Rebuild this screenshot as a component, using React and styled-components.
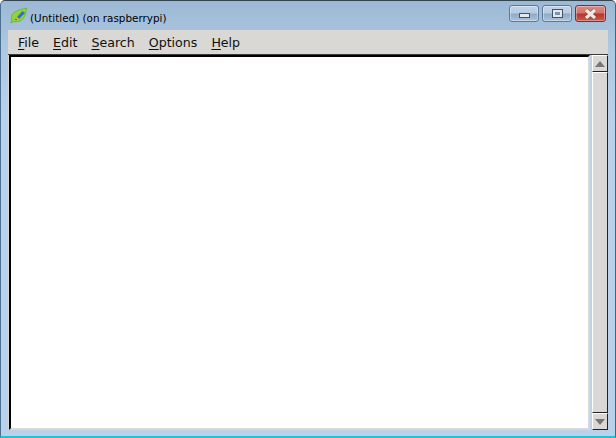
import React from "react";
import styled, { createGlobalStyle } from "styled-components";

const Global = createGlobalStyle`
  html, body {
    margin: 0;
    padding: 0;
    height: 100%;
    overflow: hidden;
  }
  #root {
    height: 100%;
  }
`;

const Frame = styled.div`
  width: 616px;
  height: 438px;
  box-sizing: border-box;
  display: flex;
  flex-direction: column;
  border: 1px solid #2f6f80;
  border-left-color: #4a7090;
  border-top-color: #33454f;
  border-bottom: 2px solid #1ec3d6;
  border-radius: 5px 5px 0 0;
  padding: 0 7px 6px 7px;
  background: linear-gradient(to bottom, #9cb8d4 0, #b0c9e2 50px, #b9d1ea 120px, #b9d1ea 100%);
  font-family: "DejaVu Sans", sans-serif;
`;

const TitleBar = styled.div`
  height: 29px;
  flex: none;
  display: flex;
  align-items: center;
  padding-left: 2px;
  gap: 3px;
`;

const TitleText = styled.span`
  font-size: 10.4px;
  color: #000;
  flex: 1;
  padding-top: 4px;
`;

const WinButtons = styled.div`
  display: flex;
  gap: 3px;
  margin-right: 2px;
  margin-top: -4px;
`;

const WinButton = styled.div`
  width: ${(p) => p.$w}px;
  height: 17px;
  box-sizing: border-box;
  display: flex;
  align-items: center;
  justify-content: center;
  border: 1px solid ${(p) => (p.$close ? "#7a3030" : "#5f7a96")};
  border-radius: 3px;
  box-shadow: inset 0 0 0 1px rgba(255, 255, 255, 0.35);
  background: ${(p) =>
    p.$close
      ? "linear-gradient(to bottom, #dc8b80 0, #d3736a 45%, #b8352a 55%, #c95a4c 100%)"
      : "linear-gradient(to bottom, #c2d5e9 0, #b4cbe2 45%, #8fabc8 55%, #aac4de 100%)"};
`;

const MinGlyph = styled.div`
  width: 11px;
  height: 5px;
  box-sizing: border-box;
  background: #e4e8ec;
  border: 1px solid #3f5468;
  margin-top: 4px;
`;

const MaxGlyph = styled.div`
  width: 11px;
  height: 9px;
  box-sizing: border-box;
  background: #e4e8ec;
  border: 1px solid #3f5468;
  display: flex;
  align-items: center;
  justify-content: center;

  &::after {
    content: "";
    width: 5px;
    height: 3px;
    background: #7b93ab;
  }
`;

const MenuBar = styled.div`
  height: 24px;
  flex: none;
  display: flex;
  align-items: center;
  padding-left: 10px;
  gap: 14px;
  background: #d9d8d4;
  border-bottom: 1px solid #3a3a3a;
  font-size: 12.6px;
  color: #111;
`;

const MenuItem = styled.span`
  u {
    text-underline-offset: 2px;
  }
`;

const Body = styled.div`
  flex: 1;
  min-height: 0;
  display: flex;
  background: #d9d8d4;
`;

const TextArea = styled.div`
  flex: 1;
  background: #fff;
  margin-left: 1px;
  border-top: 2px solid #000;
  border-left: 2px solid #000;
  border-right: 2px solid #d9d8d4;
  border-bottom: 2px solid #d9d8d4;
`;

const ScrollBar = styled.div`
  width: 18px;
  flex: none;
  display: flex;
  flex-direction: column;
  box-sizing: border-box;
  padding-left: 2px;
  background: #b9d1ea;
`;

const Arrow = styled.div`
  height: 15px;
  flex: none;
  display: flex;
  align-items: center;
  justify-content: center;
  background: #d9d8d4;
  border: 1px solid #222;
  border-left-color: #fff;
  border-top-color: #fff;
`;

const Thumb = styled.div`
  flex: 1;
  background: #d9d8d4;
  border: 1px solid #222;
  border-left-color: #fff;
  border-top-color: #fff;
`;

const Tri = styled.div`
  width: 0;
  height: 0;
  border-left: 5px solid transparent;
  border-right: 5px solid transparent;
  ${(p) => (p.$down ? "border-top: 6px solid #777;" : "border-bottom: 6px solid #777;")}
`;

const Leaf = () => (
  <svg width="17" height="17" viewBox="0 0 17 17">
    <path d="M0.5 16 C2.5 14.5 1.5 13 1.5 10 C1.5 5 8 3 16.5 1 C16 8 13 14.5 7.5 14.5 C5 14.5 3 14.5 0.5 16Z" fill="#8ed43c" stroke="#6cb02c" strokeWidth="0.8" />
    <path d="M7 10 L12.5 4 L15 6 L9 12Z" fill="#2f6fd0" />
    <path d="M5 13 L7 10 L9 12Z" fill="#e8b020" />
    <path d="M5 13 L6 11.5 L7 13Z" fill="#a02020" />
  </svg>
);

const menus = [
  ["F", "ile"],
  ["E", "dit"],
  ["S", "earch"],
  ["O", "ptions"],
  ["H", "elp"],
];

export default function App() {
  return (
    <>
      <Global />
      <Frame>
        <TitleBar>
          <Leaf />
          <TitleText>(Untitled) (on raspberrypi)</TitleText>
          <WinButtons>
            <WinButton $w={30}>
              <MinGlyph />
            </WinButton>
            <WinButton $w={30}>
              <MaxGlyph />
            </WinButton>
            <WinButton $w={31} $close>
              <svg width="17" height="12" viewBox="0 0 17 12">
                <path d="M4 2 L13 10 M13 2 L4 10" stroke="#4a2a2a" strokeWidth="4.4" opacity="0.45" />
                <path d="M4 2 L13 10 M13 2 L4 10" stroke="#ece8e6" strokeWidth="3.2" />
              </svg>
            </WinButton>
          </WinButtons>
        </TitleBar>
        <MenuBar>
          {menus.map(([k, rest]) => (
            <MenuItem key={k}>
              <u>{k}</u>
              {rest}
            </MenuItem>
          ))}
        </MenuBar>
        <Body>
          <TextArea />
          <ScrollBar>
            <Arrow>
              <Tri />
            </Arrow>
            <Thumb />
            <Arrow>
              <Tri $down />
            </Arrow>
          </ScrollBar>
        </Body>
      </Frame>
    </>
  );
}
